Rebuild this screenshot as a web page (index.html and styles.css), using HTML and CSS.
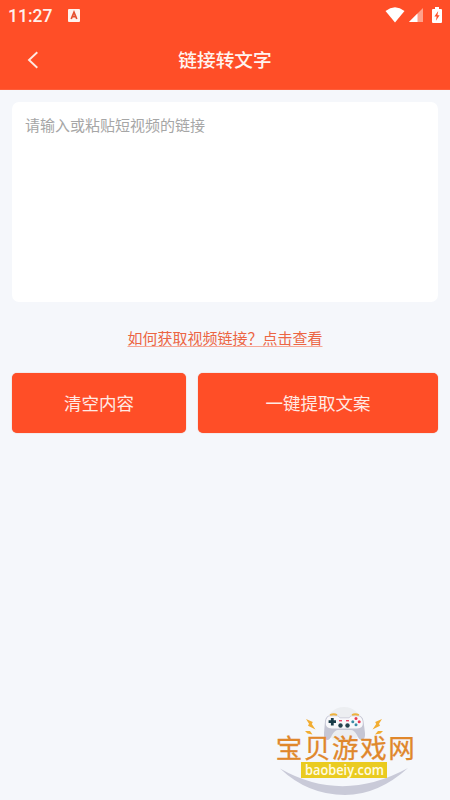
FILE: index.html
```
<!DOCTYPE html>
<html lang="zh-CN">
<head>
    <meta charset="UTF-8">
    <meta name="viewport" content="width=device-width, initial-scale=1.0">
    <title>链接转文字</title>
    <link rel="stylesheet" href="styles.css">
</head>
<body>
    <div class="status-bar">
        <span class="time">11:27</span>
        <svg class="app-icon" width="12" height="13" viewBox="0 0 12 13">
            <rect width="12" height="13" rx="1" fill="#fff3ee"/>
            <path d="M3.2 10 L6 3.2 L8.8 10 M4.3 7.7 H7.7" fill="none" stroke="#e5502f" stroke-width="1.7"/>
        </svg>
        <div class="status-icons">
            <svg width="20" height="16" viewBox="0 0 20 16">
                <path d="M0.5 4 Q10 -3.4 19.5 4 L10 15.5 Z" fill="#fff"/>
            </svg>
            <svg width="14" height="14" viewBox="0 0 14 14">
                <path d="M14 0 V14 H0 Z" fill="#ffa18a"/>
                <path d="M8.5 5.5 V14 H0 Z" fill="#fff"/>
            </svg>
            <svg width="10" height="16" viewBox="0 0 10 16">
                <path d="M3 0 H7 V2 H9 Q10 2 10 3 V15 Q10 16 9 16 H1 Q0 16 0 15 V3 Q0 2 1 2 H3 Z" fill="#fff"/>
                <path d="M6.2 4 L2.4 9.6 H4.7 L3.9 13.8 L7.6 8.2 H5.4 Z" fill="#ff4e27"/>
            </svg>
        </div>
    </div>

    <header class="header">
        <a class="back" href="#">
            <svg width="12" height="18" viewBox="0 0 12 18">
                <path d="M10.3 1.3 L2 9 L10.3 16.7" fill="none" stroke="#ffe9e2" stroke-width="1.9"/>
            </svg>
        </a>
        <h1>链接转文字</h1>
    </header>

    <main class="content">
        <textarea class="link-input" placeholder="请输入或粘贴短视频的链接"></textarea>
        <a class="help-link" href="#">如何获取视频链接？点击查看</a>
        <div class="buttons">
            <button class="btn clear">清空内容</button>
            <button class="btn extract">一键提取文案</button>
        </div>
    </main>

    <!-- Site logo -->
    <svg class="watermark" width="160" height="100" viewBox="0 0 160 100">
        <circle cx="79" cy="25" r="18" fill="#eceef1"/>
        <path d="M15 68.5 Q77 104 143 68 Q113 95 80 95 Q43 95 15 68.5 Z" fill="#c9cad8"/>
        <!-- controller -->
        <path d="M60 21 Q61 15.5 65 15.5 H73 L75 17.5 H84 L86 15.5 H93 Q97.5 15.5 98.5 21 L100 33 Q100.5 40 96.5 40 Q94 40 92 35 Q89 30 86 30 H73 Q70 30 67 35 Q65 40 62 40 Q58.5 39 59 33 Z" fill="#c5c6d4"/>
        <path d="M60.8 22 Q61.5 16.3 65 16.3 H73 L75 18.3 H84 L86 16.3 H93 Q97 16.3 97.8 22 Q98.5 28.5 92 28.5 H67 Q60 28.5 60.8 22 Z" fill="#f8f8fb"/>
        <path d="M65 15 Q69 13.5 72 15 M87 15 Q90 13.5 94 15" fill="none" stroke="#eeb23c" stroke-width="1.8"/>
        <path d="M67.3 18 V25.4 M63.6 21.7 H71" stroke="#183b48" stroke-width="2.8"/>
        <circle cx="75.5" cy="25.5" r="2.2" fill="#24424e"/>
        <circle cx="82.5" cy="25.5" r="2.2" fill="#24424e"/>
        <rect x="74" y="20" width="3" height="1.4" fill="#e9486a"/>
        <rect x="81" y="20" width="3" height="1.4" fill="#e9486a"/>
        <circle cx="91" cy="18.6" r="1.5" fill="#e93955"/>
        <circle cx="91" cy="24.8" r="1.5" fill="#3b8ca5"/>
        <circle cx="87.8" cy="21.7" r="1.5" fill="#3b8ca5"/>
        <circle cx="94.2" cy="21.7" r="1.5" fill="#e93955"/>
        <!-- sparks -->
        <g fill="#f2ad32">
            <path d="M41 19 L47.8 22 L46.8 24 L50.5 29.5 L43 25.8 L44 23.7 Z"/>
            <path d="M117 19 L110.2 22 L111.2 24 L107.5 29.5 L115 25.8 L114 23.7 Z"/>
            <path d="M40 31 L45 31 L47.5 34.5 L42.5 33.5 Z"/>
            <path d="M118 31 L113 31 L110 34.5 L115.5 33.5 Z"/>
        </g>
        <text class="logo-name" x="10.8" y="57.8" textLength="139">宝贝游戏网</text>
        <rect x="36" y="62" width="86" height="16" fill="#eacb20"/>
        <text class="logo-url" x="40" y="74.5" textLength="79" lengthAdjust="spacingAndGlyphs">baobeiy.com</text>
    </svg>
</body>
</html>
```
FILE: styles.css
```
* {
    box-sizing: border-box;
}

body {
    margin: 0;
    height: 800px;
    overflow: hidden;
    background-color: #f5f7fb;
    font-family: "Noto Sans CJK SC", sans-serif;
}

/* Status bar */
.status-bar {
    display: flex;
    align-items: center;
    height: 30px;
    padding: 0 8px;
    background-color: #ff4e27;
}

.time {
    width: 60px;
    font-family: Roboto, sans-serif;
    font-size: 17.5px;
    font-weight: 500;
    line-height: 30px;
    color: #fff0eb;
    padding-top: 1px;
}

.status-icons {
    display: flex;
    align-items: center;
    gap: 4px;
    margin-left: auto;
}

.status-icons svg:last-child {
    margin-left: 5px;
}

/* Header */
.header {
    display: grid;
    grid-template-columns: 65px 1fr 65px;
    align-items: center;
    height: 60px;
    background-color: #ff4e27;
    border-bottom: 1px solid #ff5d3a;
}

.back {
    display: flex;
    justify-content: center;
}

.header h1 {
    margin: 0;
    padding-bottom: 2px;
    font-size: 18.7px;
    font-weight: 500;
    text-align: center;
    color: #fff4f0;
}

/* Content */
.content {
    display: flex;
    flex-direction: column;
    align-items: center;
    padding: 12px;
}

.link-input {
    display: block;
    width: 100%;
    height: 200px;
    padding: 11px 13px;
    border: none;
    border-radius: 7px;
    resize: none;
    background-color: #fff;
    font-family: inherit;
    font-size: 15px;
    line-height: 24px;
}

.link-input::placeholder {
    color: #a6a6a6;
}

.help-link {
    margin-top: 24px;
    font-size: 15px;
    line-height: 24px;
    color: #ec6543;
    text-decoration: underline;
    text-decoration-color: #f5a897;
    text-decoration-thickness: 1px;
    text-underline-offset: 2px;
}

.buttons {
    display: flex;
    gap: 12px;
    width: 100%;
    margin-top: 23px;
}

.btn {
    height: 60px;
    padding: 0 0 2px;
    border: none;
    border-radius: 5px;
    background-color: #ff4e27;
    color: #ffeae4;
    font-family: inherit;
    font-size: 17.5px;
    box-shadow: 0 0 1px #e07a62;
}

.clear {
    width: 174px;
}

.extract {
    flex: 1;
}

/* Logo in the corner */
.watermark {
    position: absolute;
    left: 265px;
    top: 700px;
}

.logo-name {
    font-size: 26.5px;
    fill: #e0872b;
    stroke: #e0872b;
    stroke-width: 0.3;
}

.logo-url {
    font-family: "Open Sans", sans-serif;
    font-size: 13.5px;
    font-weight: 600;
    fill: #fffbe0;
}
```
